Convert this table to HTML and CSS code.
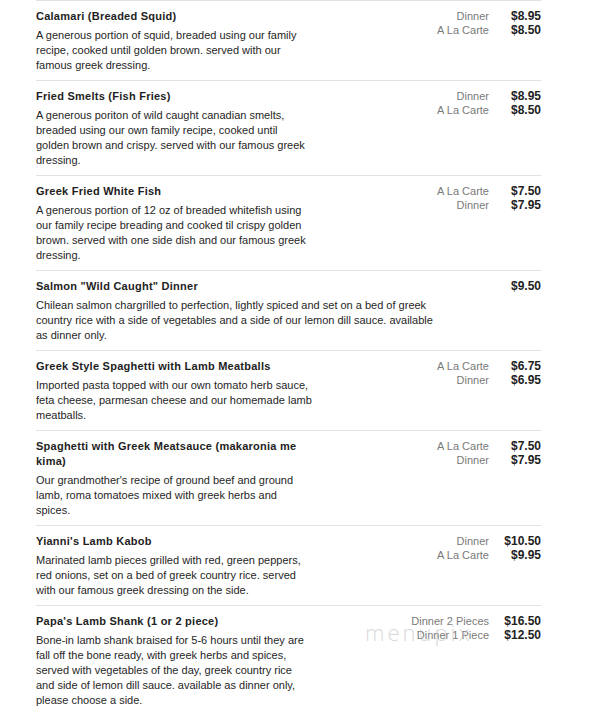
FILE: index.html
```html
<!DOCTYPE html>
<html>
<head>
<meta charset="utf-8">
<link rel="stylesheet" href="styles.css">
</head>
<body>
<div class="menu">
  <div class="item">
    <div class="info">
      <div class="name">Calamari (Breaded Squid)</div>
      <div class="desc">A generous portion of squid, breaded using our family recipe, cooked until golden brown. served with our famous greek dressing.</div>
    </div>
    <div class="prices">
      <span class="label">Dinner</span><span class="price">$8.95</span>
      <span class="label">A La Carte</span><span class="price">$8.50</span>
    </div>
  </div>
  <div class="item">
    <div class="info">
      <div class="name">Fried Smelts (Fish Fries)</div>
      <div class="desc">A generous poriton of wild caught canadian smelts, breaded using our own family recipe, cooked until golden brown and crispy. served with our famous greek dressing.</div>
    </div>
    <div class="prices">
      <span class="label">Dinner</span><span class="price">$8.95</span>
      <span class="label">A La Carte</span><span class="price">$8.50</span>
    </div>
  </div>
  <div class="item">
    <div class="info">
      <div class="name">Greek Fried White Fish</div>
      <div class="desc">A generous portion of 12 oz of breaded whitefish using our family recipe breading and cooked til crispy golden brown. served with one side dish and our famous greek dressing.</div>
    </div>
    <div class="prices">
      <span class="label">A La Carte</span><span class="price">$7.50</span>
      <span class="label">Dinner</span><span class="price">$7.95</span>
    </div>
  </div>
  <div class="item">
    <div class="info wide">
      <div class="name">Salmon "Wild Caught" Dinner</div>
      <div class="desc">Chilean salmon chargrilled to perfection, lightly spiced and set on a bed of greek country rice with a side of vegetables and a side of our lemon dill sauce. available as dinner only.</div>
    </div>
    <div class="prices">
      <span class="label"></span><span class="price">$9.50</span>
    </div>
  </div>
  <div class="item">
    <div class="info">
      <div class="name">Greek Style Spaghetti with Lamb Meatballs</div>
      <div class="desc">Imported pasta topped with our own tomato herb sauce, feta cheese, parmesan cheese and our homemade lamb meatballs.</div>
    </div>
    <div class="prices">
      <span class="label">A La Carte</span><span class="price">$6.75</span>
      <span class="label">Dinner</span><span class="price">$6.95</span>
    </div>
  </div>
  <div class="item">
    <div class="info">
      <div class="name">Spaghetti with Greek Meatsauce (makaronia me kima)</div>
      <div class="desc">Our grandmother's recipe of ground beef and ground lamb, roma tomatoes mixed with greek herbs and spices.</div>
    </div>
    <div class="prices">
      <span class="label">A La Carte</span><span class="price">$7.50</span>
      <span class="label">Dinner</span><span class="price">$7.95</span>
    </div>
  </div>
  <div class="item">
    <div class="info">
      <div class="name">Yianni's Lamb Kabob</div>
      <div class="desc">Marinated lamb pieces grilled with red, green peppers, red onions, set on a bed of greek country rice. served with our famous greek dressing on the side.</div>
    </div>
    <div class="prices">
      <span class="label">Dinner</span><span class="price">$10.50</span>
      <span class="label">A La Carte</span><span class="price">$9.95</span>
    </div>
  </div>
  <div class="item">
    <div class="info">
      <div class="name">Papa's Lamb Shank (1 or 2 piece)</div>
      <div class="desc">Bone-in lamb shank braised for 5-6 hours until they are fall off the bone ready, with greek herbs and spices, served with vegetables of the day, greek country rice and side of lemon dill sauce. available as dinner only, please choose a side.</div>
    </div>
    <div class="prices">
      <span class="label">Dinner 2 Pieces</span><span class="price">$16.50</span>
      <span class="label">Dinner 1 Piece</span><span class="price">$12.50</span>
    </div>
    <div class="watermark">menupix</div>
  </div>
</div>
</body>
</html>
```
FILE: styles.css
```css
html, body {
  margin: 0;
  padding: 0;
  background: #ffffff;
}
body {
  font-family: "Liberation Sans", Arial, sans-serif;
  color: #222222;
}
.menu {
  margin-left: 36px;
  width: 505px;
}
.item {
  position: relative;
  display: flex;
  justify-content: space-between;
  align-items: flex-start;
  border-top: 1px solid #e2e2e2;
  padding: 8px 0 7px 0;
}
.info {
  width: 277px;
}
.info.wide {
  width: 405px;
}
.name {
  font-size: 11px;
  font-weight: bold;
  line-height: 15px;
  letter-spacing: 0.25px;
  color: #1e1e1e;
}
.desc {
  margin-top: 4px;
  font-size: 11px;
  line-height: 15px;
  color: #262626;
}
.prices {
  display: grid;
  grid-template-columns: auto 52px;
  align-items: baseline;
}
.label {
  font-size: 11px;
  line-height: 14px;
  color: #7a7a7a;
  text-align: right;
}
.price {
  font-size: 12px;
  line-height: 14px;
  font-weight: bold;
  color: #1e1e1e;
  text-align: right;
}
.watermark {
  position: absolute;
  left: 329px;
  top: 11px;
  font-family: "Open Sans", sans-serif;
  font-weight: 300;
  font-size: 22px;
  line-height: 30px;
  letter-spacing: 3px;
  color: rgba(190, 190, 190, 0.6);
  pointer-events: none;
}
```
